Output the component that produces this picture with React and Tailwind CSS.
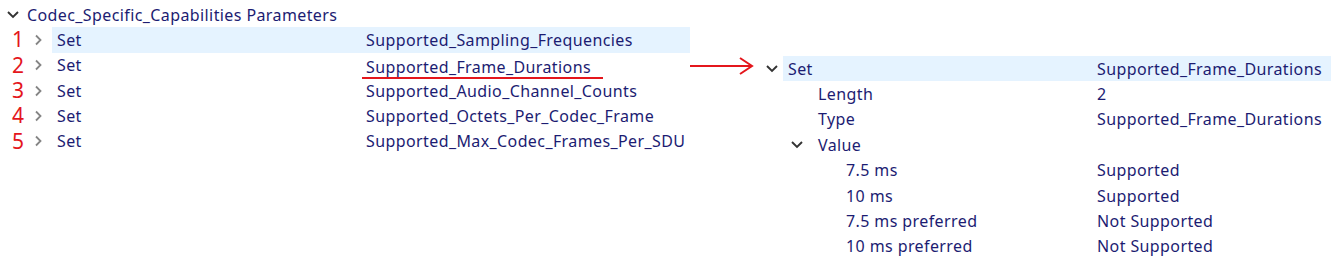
import React from 'react'

const RED = '#e4161c'

// Small tree chevrons, drawn like the Windows tree view glyphs
function ChevronRight() {
  return (
    <svg width="9" height="14" viewBox="0 0 9 14" className="shrink-0">
      <path d="M2 2.5l4.5 4.5-4.5 4.5" fill="none" stroke="#858585" strokeWidth="1.8" />
    </svg>
  )
}

function ChevronDown() {
  return (
    <svg width="14" height="9" viewBox="0 0 14 9" className="shrink-0">
      <path d="M2 2l5 5 5-5" fill="none" stroke="#333" strokeWidth="1.9" />
    </svg>
  )
}

const sets = [
  'Supported_Sampling_Frequencies',
  'Supported_Frame_Durations',
  'Supported_Audio_Channel_Counts',
  'Supported_Octets_Per_Codec_Frame',
  'Supported_Max_Codec_Frames_Per_SDU',
]

const values = [
  ['7.5 ms', 'Supported'],
  ['10 ms', 'Supported'],
  ['7.5 ms preferred', 'Not Supported'],
  ['10 ms preferred', 'Not Supported'],
]

function LeftTree() {
  return (
    <div className="w-[690px] shrink-0 pt-[2px]">
      <div className="flex h-[25.3px] items-center">
        <div className="flex w-[25px] justify-center">
          <ChevronDown />
        </div>
        <span className="pl-[2px]">Codec_Specific_Capabilities Parameters</span>
      </div>
      {sets.map((name, i) => (
        <div key={name} className="flex h-[25.3px] items-center">
          <span className="w-[25px] pr-[1px] text-right text-[21px] leading-none tracking-normal text-[#e4161c]">
            {i + 1}
          </span>
          <div className="flex w-[27px] justify-center">
            <ChevronRight />
          </div>
          <div className={`flex h-full flex-1 items-center pl-[5px] ${i === 0 ? 'bg-[#e5f3ff]' : ''}`}>
            <span className="w-[309px] shrink-0">Set</span>
            {i === 1 ? (
              <span className="-ml-[4px] mt-[5px] inline-block border-b-2 border-[#e4161c] pl-[4px] pr-[12px] leading-[20px]">
                {name}
              </span>
            ) : (
              <span>{name}</span>
            )}
          </div>
        </div>
      ))}
    </div>
  )
}

function Arrow() {
  return (
    <div className="w-[70px] shrink-0 pt-[56px]">
      <svg width="70" height="22" viewBox="0 0 70 22">
        <path d="M0 10H62" stroke={RED} strokeWidth="2" />
        <path d="M50 2l12 8-12 8" fill="none" stroke={RED} strokeWidth="2" />
      </svg>
    </div>
  )
}

function RightTree() {
  return (
    <div className="flex-1 pt-[56px]">
      <div className="flex h-[25.4px] items-center">
        <div className="flex w-[23px] justify-center">
          <ChevronDown />
        </div>
        <div className="flex h-full flex-1 items-center bg-[#e5f3ff] pl-[5px]">
          <span className="w-[309px] shrink-0">Set</span>
          <span>Supported_Frame_Durations</span>
        </div>
      </div>
      <div className="flex h-[25.4px] items-center pl-[58px]">
        <span className="w-[279px] shrink-0">Length</span>
        <span>2</span>
      </div>
      <div className="flex h-[25.4px] items-center pl-[58px]">
        <span className="w-[279px] shrink-0">Type</span>
        <span>Supported_Frame_Durations</span>
      </div>
      <div className="flex h-[25.4px] items-center pl-[30px]">
        <div className="flex w-[28px] justify-start">
          <ChevronDown />
        </div>
        <span>Value</span>
      </div>
      {values.map(([k, v]) => (
        <div key={k} className="flex h-[25.4px] items-center pl-[86px]">
          <span className="w-[251px] shrink-0">{k}</span>
          <span>{v}</span>
        </div>
      ))}
    </div>
  )
}

export default function App() {
  return (
    <div className="flex h-[272px] w-[1331px] overflow-hidden bg-white font-['Noto_Sans',sans-serif] text-[16px] tracking-[0.4px] text-[#1c1c72]">
      <LeftTree />
      <Arrow />
      <RightTree />
    </div>
  )
}
